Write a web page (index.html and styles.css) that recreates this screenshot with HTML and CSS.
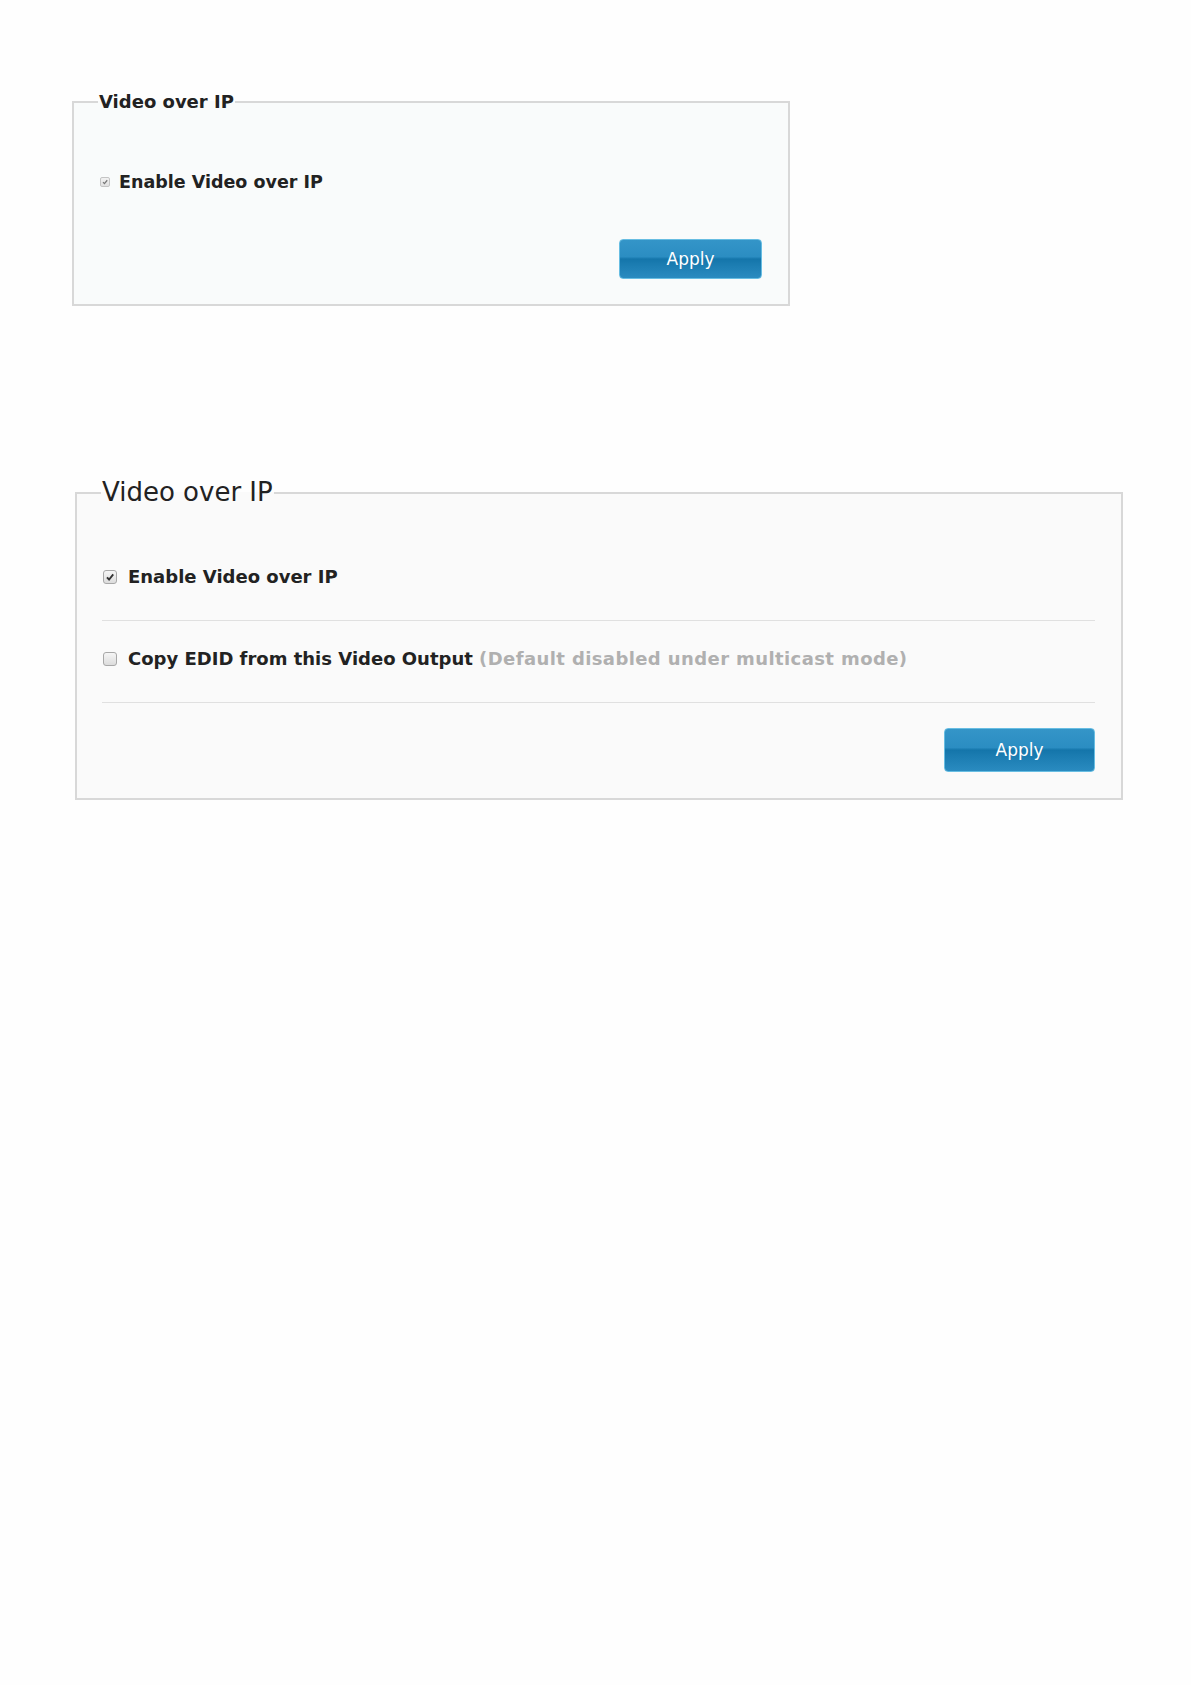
FILE: index.html
```html
<!DOCTYPE html>
<html lang="en">
<head>
  <meta charset="UTF-8">
  <title>Video over IP</title>
  <link rel="stylesheet" href="styles.css">
</head>
<body>
  <!-- compact panel -->
  <fieldset class="panel panel-small">
    <legend>Video over IP</legend>
    <div class="panel-body">
      <label class="opt opt-small">
        <span class="check check-small checked">
          <svg viewBox="0 0 10 10"><path d="M2.5 5.2 L4.3 7 L7.8 2.8" /></svg>
        </span>
        <span>Enable Video over IP</span>
      </label>
      <div class="actions">
        <button class="btn btn-small">Apply</button>
      </div>
    </div>
  </fieldset>

  <!-- full panel -->
  <fieldset class="panel panel-large">
    <legend>Video over IP</legend>
    <div class="panel-body">
      <div class="row">
        <label class="opt">
          <span class="check checked">
            <svg viewBox="0 0 13 13"><path d="M3.2 6.8 L5.5 9.2 L10 3.6" /></svg>
          </span>
          <span>Enable Video over IP</span>
        </label>
      </div>
      <div class="row">
        <label class="opt">
          <span class="check"></span>
          <span>Copy EDID from this Video Output <span class="hint">(Default disabled under multicast mode)</span></span>
        </label>
      </div>
      <div class="actions">
        <button class="btn">Apply</button>
      </div>
    </div>
  </fieldset>
</body>
</html>
```

FILE: styles.css
```css
body {
  margin: 0;
  background: #fefefe;
  font-family: "DejaVu Sans", Verdana, sans-serif;
  color: #222;
}

.panel {
  margin: 0;
  padding: 0;
  border: 2px solid #d8d8d8;
  box-sizing: border-box;
}

.panel legend {
  margin-left: 24px;
  padding: 0 1px;
}

/* 上面的小面板 */
.panel-small {
  margin: 92px 0 0 72px;
  width: 718px;
  background: #f9fbfb;
}
.panel-small legend {
  font-weight: bold;
  font-size: 18px;
  line-height: 20px;
}
.panel-small .panel-body {
  padding: 60px 26px 25px 24px;
}
.panel-small .actions {
  margin-top: 47px;
}

/* 下面的大面板 */
.panel-large {
  margin: 172px 0 0 75px;
  width: 1048px;
  background: #fafafa;
}
.panel-large legend {
  font-size: 26px;
  line-height: 29px;
}
.panel-large .panel-body {
  padding: 32px 26px 26px 25px;
}
.panel-large .actions {
  margin-top: 25px;
}

.row {
  padding: 27px 0 33px;
  border-bottom: 1px solid #e0e0e0;
}

.opt {
  display: flex;
  align-items: center;
  font-weight: bold;
  font-size: 18px;
  line-height: 21px;
  white-space: nowrap;
}
.opt-small {
  font-size: 17.5px;
  line-height: 20px;
}

.hint {
  color: #b0b0b0;
  letter-spacing: 0.4px;
}

/* 复选框 */
.check {
  box-sizing: border-box;
  width: 14px;
  height: 14px;
  margin: 0 11px 0 1px;
  border: 1px solid #a8a8a8;
  border-radius: 3px;
  background: linear-gradient(#f6f6f6, #dcdcdc);
  flex: none;
}
.check svg {
  display: block;
  width: 100%;
  height: 100%;
  fill: none;
  stroke: #333;
  stroke-width: 2;
}
.check-small {
  width: 10px;
  height: 10px;
  margin: 0 9px 0 2px;
  border-color: #c4c4c4;
  border-radius: 2px;
  background: linear-gradient(#f2f2f2, #e0e0e0);
}
.check-small svg {
  stroke: #777;
  stroke-width: 1.6;
}

.actions {
  display: flex;
  justify-content: flex-end;
}

/* 蓝色按钮 */
.btn {
  width: 151px;
  height: 44px;
  padding: 0;
  border: 1px solid #67bde2;
  border-radius: 4px;
  background: linear-gradient(#3495c8 0%, #2b8dc2 44%, #1475aa 50%, #1a7bb0 62%, #2a8bc0 100%);
  color: #fff;
  font-family: "DejaVu Sans", Verdana, sans-serif;
  font-size: 17px;
}
.btn-small {
  width: 143px;
  height: 40px;
}
```
